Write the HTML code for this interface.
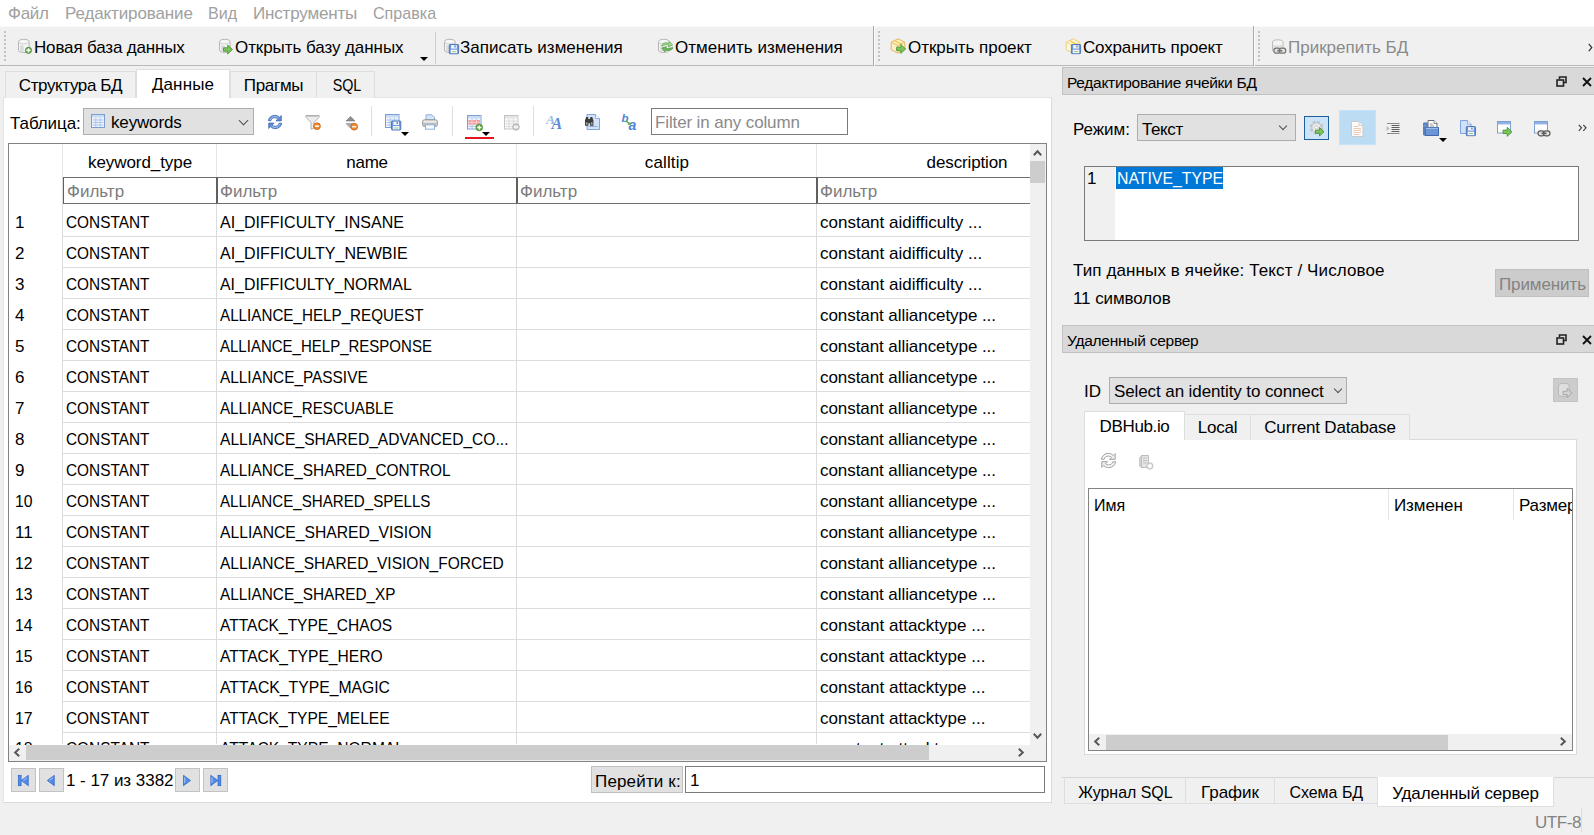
<!DOCTYPE html>
<html lang="ru"><head><meta charset="utf-8"><title>DB Browser for SQLite</title>
<style>
*{box-sizing:border-box;margin:0;padding:0}
html,body{width:1594px;height:835px;overflow:hidden;background:#f0f0f0}
body{font-family:"Liberation Sans",sans-serif;font-size:17px;color:#000;position:relative;line-height:20px}
.abs,.t{position:absolute;white-space:nowrap}
.t{line-height:20px;height:20px}
svg{position:absolute;overflow:visible}
#menubar{position:absolute;left:0;top:0;width:1594px;height:26px;background:#fff}
#menubar .t{color:#a0a0a0;top:4px}
#toolbar{position:absolute;left:0;top:26px;width:1594px;height:40px;background:#f0f0f0;border-top:1px solid #fafafa;border-bottom:1px solid #b9b9b9}
#toolbar .t{top:11px}
.grip{position:absolute;top:4px;width:2px;height:31px;background:repeating-linear-gradient(to bottom,#c2c2c2 0 2px,transparent 2px 4px)}
.vsep{position:absolute;width:1px;background:#cfcfcf}
.tsep{position:absolute;width:2px;top:-1px;height:40px;border-left:1px solid #a9a9a9;border-right:1px solid #fbfbfb}
/* tabs */
.tab{position:absolute;top:71px;height:27px;background:#f0f0f0;border:1px solid #dedede;border-bottom:none;text-align:center;line-height:27px;white-space:nowrap}
.tab.sel{top:69px;height:29px;background:#fff;line-height:29px;border-color:#dedede}
#pane{position:absolute;left:3px;top:97px;width:1049px;height:706px;background:#fff;border:1px solid #e3e3e3;border-right-color:#dadada;border-bottom-color:#dadada}
.combo{position:absolute;background:#e1e1e1;border:1px solid #adadad}
.input{position:absolute;background:#fff;border:1px solid #7a7a7a}
/* table */
#tbl{position:absolute;left:8px;top:143px;width:1039px;height:619px;border:1px solid #828282;background:#fff;overflow:hidden}
.row{position:absolute;left:0;width:1021px;height:31px}
.row:after{content:'';position:absolute;left:54px;right:0;bottom:0;height:1px;background:#dcdcdc}
.row>span{position:absolute;top:7px;line-height:20px;white-space:nowrap}
.c0{left:6px}.c1{left:57px}.c2{left:211px}.c4{left:811px}
.uc{transform:scaleX(.91);transform-origin:0 50%}
.colsep{position:absolute;width:1px;background:linear-gradient(#e6e6e6 0,#e6e6e6 33px,#dcdcdc 33px);top:0;height:600px}
.hdr{position:absolute;top:9px;line-height:20px;text-align:center;white-space:nowrap}
.flt{position:absolute;top:33px;height:27px;border:1px solid #6e6e6e;border-left:2px solid #606060;color:#7c7c7c;line-height:27px;padding-left:2px;background:#fff;white-space:nowrap}
.sbtn{position:absolute;background:#e1e1e1;border:1px solid #c3c3c3}
.dockt{position:absolute;left:1062px;width:534px;height:28px;background:#d9d9d9;border:1px solid #c2c2c2;line-height:29px;padding-left:4px;font-size:15.5px;white-space:nowrap}
.rtab{position:absolute;top:414px;height:26px;background:#f0f0f0;border:1px solid #dedede;border-bottom:none;text-align:center;line-height:26px;white-space:nowrap}
.rtab.sel{top:411px;height:29px;background:#fff;line-height:30px}
.btab{position:absolute;top:777px;height:27px;background:#f0f0f0;border:1px solid #dedede;border-top-color:#d4d4d4;text-align:center;line-height:29px;white-space:nowrap}
.btab.sel{height:30px;background:#fff;line-height:31px;border-top-color:#fff}
.arr{position:absolute;width:0;height:0;border-left:4px solid transparent;border-right:4px solid transparent;border-top:4px solid #000}
.chev{position:absolute;width:7px;height:7px;border-right:1.3px solid #505050;border-bottom:1.3px solid #505050}
.sba{border-right:2px solid #606060;border-bottom:2px solid #606060}

</style></head>
<body>
<div id="menubar">
<span class="t" style="letter-spacing:-0.26px;left:8px">Файл</span>
<span class="t" style="letter-spacing:-0.12px;left:65px">Редактирование</span>
<span class="t" style="left:208px"><span style="display:inline-block;transform:scaleX(0.945);transform-origin:left center">Вид</span></span>
<span class="t" style="letter-spacing:-0.17px;left:253px">Инструменты</span>
<span class="t" style="left:373px"><span style="display:inline-block;transform:scaleX(0.946);transform-origin:left center">Справка</span></span>
</div>
<div id="toolbar">
<div class="grip" style="left:4px"></div>
<svg style="left:17px;top:11px" width="16" height="16" viewBox="0 0 16 16"><path d="M1.5 3.6C1.5 2.2 3.9 1.3 6.8 1.3s5.3.9 5.3 2.3v8.6c0 1.4-2.4 2.3-5.3 2.3s-5.3-.9-5.3-2.3z" fill="#f6f6f6" stroke="#b4b4b4"/><path d="M3 6.5v6.3c1 .6 2.3.9 3.8.9V7.4C5.300 7.400 4 7.100 3 6.500z" fill="#dcdcdc"/><path d="M1.500 3.600c0 1.400 2.400 2.300 5.300 2.300s5.300-.900 5.300-2.300" fill="none" stroke="#cfcfcf"/><circle cx="11.5" cy="12.3" r="3.1" fill="#69aa48" stroke="#468a30" stroke-width=".8"/><path d="M11.5 10.200000000000001v4.200M9.4 12.3h4.200" stroke="#fff" stroke-width="1.400"/></svg>
<span class="t" style="letter-spacing:-0.16px;left:34px">Новая база данных</span>
<svg style="left:218px;top:11px" width="16" height="16" viewBox="0 0 16 16"><path d="M1.5 3.6C1.5 2.2 3.9 1.3 6.8 1.3s5.3.9 5.3 2.3v8.6c0 1.4-2.4 2.3-5.3 2.3s-5.3-.9-5.3-2.3z" fill="#f6f6f6" stroke="#b4b4b4"/><path d="M3 6.5v6.3c1 .6 2.3.9 3.8.9V7.4C5.300 7.400 4 7.100 3 6.500z" fill="#dcdcdc"/><path d="M1.500 3.600c0 1.400 2.400 2.300 5.300 2.300s5.300-.900 5.300-2.300" fill="none" stroke="#cfcfcf"/><polygon points="5.5,9.8 9.7,9.8 9.7,7.0 14.5,11.5 9.7,16.0 9.7,13.2 5.5,13.2" fill="#7cc35e" stroke="#4c9638" stroke-width=".9" stroke-linejoin="round"/></svg>
<span class="t" style="letter-spacing:-0.07px;left:235px">Открыть базу данных</span>
<div class="arr" style="left:420px;top:30px"></div>
<div class="vsep" style="left:435px;top:5px;height:32px;background:#cdcdcd"></div>
<svg style="left:443px;top:11px" width="16" height="16" viewBox="0 0 16 16"><path d="M1.5 3.6C1.5 2.2 3.9 1.3 6.8 1.3s5.3.9 5.3 2.3v8.6c0 1.4-2.4 2.3-5.3 2.3s-5.3-.9-5.3-2.3z" fill="#f6f6f6" stroke="#b4b4b4"/><path d="M3 6.5v6.3c1 .6 2.3.9 3.8.9V7.4C5.300 7.400 4 7.100 3 6.500z" fill="#dcdcdc"/><path d="M1.500 3.600c0 1.400 2.400 2.300 5.300 2.300s5.300-.900 5.300-2.300" fill="none" stroke="#cfcfcf"/><rect x="6.3" y="6.5" width="9.3" height="9.3" rx=".8" fill="#6b97dd" stroke="#4a70b6" stroke-width=".9"/><rect x="8.1" y="7.1" width="5.700000000000001" height="3.5" fill="#f2f7ff"/><rect x="11.400000000000002" y="7.5" width="1.200" height="2" fill="#4a70b6"/><rect x="7.699999999999999" y="11.7" width="6.500000000000001" height="3.5" fill="#f6faff"/><rect x="8.7" y="13.2" width="4.500000000000001" height="1" fill="#9cc47c"/></svg>
<span class="t" style="left:460px">Записать изменения</span>
<svg style="left:657px;top:11px" width="16" height="16" viewBox="0 0 16 16"><path d="M1.5 3.6C1.5 2.2 3.9 1.3 6.8 1.3s5.3.9 5.3 2.3v8.6c0 1.4-2.4 2.3-5.3 2.3s-5.3-.9-5.3-2.3z" fill="#f6f6f6" stroke="#b4b4b4"/><path d="M3 6.5v6.3c1 .6 2.3.9 3.8.9V7.4C5.300 7.400 4 7.100 3 6.500z" fill="#dcdcdc"/><path d="M1.500 3.600c0 1.400 2.400 2.300 5.300 2.300s5.300-.900 5.300-2.300" fill="none" stroke="#cfcfcf"/><path d="M5 6.500c1.500-1.800 4.500-2.300 7-1.200l.6-1.800 3 3.600-4.400 1.600.5-1.700C9.500 6.400 7 6.800 5 8z" fill="#a4d692" stroke="#5aa64c" stroke-width=".7" stroke-linejoin="round"/><path d="M15.800 10.500c-1.500 1.800-4.500 2.600-7.200 1.500l-.7 1.800-3-3.600 4.400-1.600-.4 1.700c2.100.8 4.600.3 6.600-1.100z" fill="#6fba5c" stroke="#3f8f38" stroke-width=".7" stroke-linejoin="round"/></svg>
<span class="t" style="left:675px">Отменить изменения</span>
<div class="tsep" style="left:873px"></div>
<div class="grip" style="left:878px"></div>
<svg style="left:890px;top:11px" width="16" height="16" viewBox="0 0 16 16"><path d="M8 .8L14.800 4.300v7.400L8 15.200 1.200 11.700V4.300z" fill="#fdf0c2" stroke="#e3b661" stroke-linejoin="round"/><path d="M1.500 4.400L8 7.700l6.500-3.300M8 7.700v7.200" fill="none" stroke="#e3b661" stroke-width=".9"/><path d="M4.600 2.600l6.600 3.400" stroke="#f2cf5a" stroke-width="1.600"/><polygon points="6.6,9.2 10.8,9.2 10.8,6.4 15.6,10.9 10.8,15.4 10.8,12.6 6.6,12.6" fill="#7cc35e" stroke="#4c9638" stroke-width=".9" stroke-linejoin="round"/></svg>
<span class="t" style="letter-spacing:-0.05px;left:908px">Открыть проект</span>
<svg style="left:1065px;top:11px" width="16" height="16" viewBox="0 0 16 16"><path d="M8 .8L14.800 4.300v7.400L8 15.200 1.200 11.700V4.300z" fill="#fdf6d8" stroke="#ecd27c" stroke-linejoin="round"/><path d="M1.500 4.400L8 7.700l6.500-3.300M8 7.700v7.200" fill="none" stroke="#ecd27c" stroke-width=".9"/><path d="M4.600 2.600l6.600 3.400" stroke="#f2cf5a" stroke-width="1.600"/><rect x="6.4" y="6.5" width="9.2" height="9.2" rx=".8" fill="#6b97dd" stroke="#4a70b6" stroke-width=".9"/><rect x="8.200000000000001" y="7.1" width="5.6" height="3.5" fill="#f2f7ff"/><rect x="11.399999999999999" y="7.5" width="1.200" height="2" fill="#4a70b6"/><rect x="7.800000000000001" y="11.7" width="6.3999999999999995" height="3.5" fill="#f6faff"/><rect x="8.8" y="13.1" width="4.3999999999999995" height="1" fill="#9cc47c"/></svg>
<span class="t" style="letter-spacing:-0.16px;left:1083px">Сохранить проект</span>
<div class="tsep" style="left:1253px"></div>
<div class="grip" style="left:1258px"></div>
<svg style="left:1271px;top:11px" width="16" height="16" viewBox="0 0 16 16"><path d="M1.500 4C1.500 2.600 3.900 1.800 6.800 1.800s5.300.8 5.300 2.200v8c0 1.400-2.400 2.300-5.300 2.300s-5.300-.9-5.300-2.300z" fill="#f4f4f4" stroke="#bcbcbc"/><path d="M2.500 6.500v6c1.200.7 2.600 1 4.300 1s3.100-.3 4.300-1v-6c-1.200.7-2.600 1-4.300 1s-3.100-.3-4.300-1z" fill="#dedede"/><rect x="2.8" y="10.2" width="6.500" height="5" rx="2.500" fill="#e2e2e2" stroke="#747474" stroke-width="1.200"/><rect x="8.3" y="10.2" width="6.500" height="5" rx="2.500" fill="#e2e2e2" stroke="#747474" stroke-width="1.200"/><path d="M6.3 12.7h5" stroke="#747474" stroke-width="1.600"/></svg>
<span class="t" style="left:1288px;color:#8a8a8a">Прикрепить БД</span>
<svg style="left:1588px;top:16px" width="5" height="9" viewBox="0 0 5 9"><path d="M.800 .800L3.800 4.500.800 8.200" stroke="#333" stroke-width="1.200" fill="none"/></svg>
</div>

<div id="pane"></div>
<div class="tab" style="letter-spacing:-0.38px;left:5px;width:131px">Структура БД</div>
<div class="tab sel" style="letter-spacing:0.13px;left:136px;width:94px">Данные</div>
<div class="tab" style="letter-spacing:-0.28px;left:230px;width:87px">Прагмы</div>
<div class="tab" style="left:316px;width:59px;padding-left:3px"><span style="display:inline-block;transform:scaleX(0.840);transform-origin:center center">SQL</span></div>

<span class="t" style="letter-spacing:-0.09px;left:10px;top:114px">Таблица:</span>
<div class="combo" style="left:83px;top:108px;width:171px;height:27px"><svg style="left:7px;top:5px" width="14" height="14" viewBox="0 0 14 14"><rect x="0.5" y="0.5" width="13" height="13" fill="#f1f6fd" stroke="#7c9fd3"/><rect x="1.0" y="1.0" width="12" height="2.600" fill="#c9dcf5"/><path d="M1.5 6.0h11" stroke="#a9c3ea" stroke-width="1"/><path d="M1.5 8.5h11" stroke="#a9c3ea" stroke-width="1"/><path d="M1.5 11.0h11" stroke="#a9c3ea" stroke-width="1"/><path d="M4.8 4.0v9M9.1 4.0v9" stroke="#a9c3ea" stroke-width=".9"/></svg><span class="t" style="letter-spacing:-0.16px;left:27px;top:4px">keywords</span><div class="chev" style="left:156px;top:8px;width:7px;height:7px;transform:rotate(45deg)"></div></div>
<svg style="left:267px;top:114px" width="16" height="16" viewBox="0 0 16 16"><path d="M1.300 6.800C1.800 3.400 4.600 1.300 7.800 1.300c1.900 0 3.500.700 4.700 2L14.300 1.500v5.400H8.900l1.900-1.900C10 4.200 9 3.800 7.800 3.800 5.900 3.800 4.400 5 3.900 6.800z" fill="#5b8ad2" stroke="#3c66ad" stroke-width=".7" stroke-linejoin="round"/><path d="M14.700 9.200C14.200 12.600 11.400 14.700 8.200 14.700c-1.900 0-3.500-.700-4.700-2L1.700 14.500V9.100h5.400L5.200 11c.8.800 1.800 1.200 3 1.200 1.900 0 3.400-1.200 3.900-3z" fill="#5b8ad2" stroke="#3c66ad" stroke-width=".7" stroke-linejoin="round"/><path d="M3 6C3.800 4 5.600 2.600 7.800 2.600c1.500 0 2.800.600 3.700 1.500" fill="none" stroke="#b9d3f3" stroke-width=".9"/><path d="M13 10c-.8 2-2.600 3.400-4.800 3.400-1.500 0-2.800-.600-3.700-1.500" fill="none" stroke="#b9d3f3" stroke-width=".9"/></svg>
<svg style="left:305px;top:114px" width="16" height="16" viewBox="0 0 16 16"><path d="M.800 1.500h13.400v1.500L9 8.500v5.500l-3 1.200V8.500L.800 3z" fill="#ececec" stroke="#b0b0b0" stroke-linejoin="round"/><path d="M2 2.500h11" stroke="#c8c8c8"/><circle cx="12" cy="12.2" r="3.4" fill="#ee8a2e" stroke="#c8641a" stroke-width=".8"/><path d="M10 12.2h4" stroke="#fff" stroke-width="1.500"/></svg>
<svg style="left:345px;top:115px" width="16" height="16" viewBox="0 0 16 16"><path d="M1 6l4.500-4.600L10 6z" fill="#8c9094" stroke="#70757a" stroke-width=".6"/><path d="M1 8.500h9L5.500 13.200z" fill="#a9aeb3" stroke="#8a8f94" stroke-width=".6"/><circle cx="9.2" cy="11.7" r="3.4" fill="#ee8a2e" stroke="#c8641a" stroke-width=".8"/><path d="M7.199999999999999 11.7h4" stroke="#fff" stroke-width="1.500"/></svg>
<div class="vsep" style="left:371px;top:106px;height:30px;background:#dedede"></div>
<svg style="left:385px;top:114px" width="16" height="16" viewBox="0 0 16 16"><rect x="0.5" y="0.5" width="13.5" height="13" fill="#f1f6fd" stroke="#7c9fd3"/><rect x="1.0" y="1.0" width="12.5" height="2.600" fill="#c9dcf5"/><path d="M1.5 6.0h11.5" stroke="#a9c3ea" stroke-width="1"/><path d="M1.5 8.5h11.5" stroke="#a9c3ea" stroke-width="1"/><path d="M1.5 11.0h11.5" stroke="#a9c3ea" stroke-width="1"/><path d="M5.0 4.0v9M9.4 4.0v9" stroke="#a9c3ea" stroke-width=".9"/><rect x="6.5" y="7" width="9.3" height="9" rx=".8" fill="#6b97dd" stroke="#4a70b6" stroke-width=".9"/><rect x="8.3" y="7.6" width="5.700000000000001" height="3.4" fill="#f2f7ff"/><rect x="11.600000000000001" y="8" width="1.200" height="2" fill="#4a70b6"/><rect x="7.9" y="12.0" width="6.500000000000001" height="3.4" fill="#f6faff"/><rect x="8.9" y="13.5" width="4.500000000000001" height="1" fill="#9cc47c"/></svg>
<div class="arr" style="left:401px;top:132px"></div>
<svg style="left:422px;top:114px" width="16" height="16" viewBox="0 0 16 16"><path d="M4 6V.800h6l2.500 2.500V6z" fill="#d6e6fa" stroke="#8fb0dc" stroke-linejoin="round"/><rect x=".700" y="5.800" width="14.600" height="6.700" rx="1.800" fill="#e9e9e9" stroke="#8e8e8e"/><rect x="1.300" y="8.800" width="13.400" height="3.200" fill="#bdbdbd"/><rect x="3.500" y="10.800" width="9" height="4.400" fill="#f8fbff" stroke="#8fb0dc"/></svg>
<div class="vsep" style="left:452px;top:106px;height:30px;background:#dedede"></div>
<svg style="left:467px;top:115px" width="16" height="16" viewBox="0 0 16 16"><rect x="0.5" y="0.5" width="13.5" height="13.5" fill="#f1f6fd" stroke="#7c9fd3"/><rect x="1.0" y="1.0" width="12.5" height="2.600" fill="#c9dcf5"/><path d="M1.5 6.1h11.5" stroke="#a9c3ea" stroke-width="1"/><path d="M1.5 8.8h11.5" stroke="#a9c3ea" stroke-width="1"/><path d="M1.5 11.4h11.5" stroke="#a9c3ea" stroke-width="1"/><path d="M5.0 4.0v9.5M9.4 4.0v9.5" stroke="#a9c3ea" stroke-width=".9"/><rect x="1.500" y="5" width="11.500" height="4.600" fill="#f39c9c"/><path d="M1.500 7.300h11.500M5 5v4.600M9.500 5v4.600" stroke="#fbd0d0" stroke-width=".9"/><circle cx="12.3" cy="12.5" r="3.3" fill="#69aa48" stroke="#468a30" stroke-width=".8"/><path d="M12.3 10.4v4.200M10.200000000000001 12.5h4.200" stroke="#fff" stroke-width="1.400"/></svg>
<div class="arr" style="left:482px;top:132px"></div>
<div class="abs" style="left:465px;top:137px;width:29px;height:2px;background:#e8141c"></div>
<svg style="left:504px;top:115px" width="16" height="16" viewBox="0 0 16 16"><g opacity=".9"><rect x="0.5" y="0.5" width="13.5" height="13.5" fill="#fafafa" stroke="#bdbdbd"/><rect x="1.0" y="1.0" width="12.5" height="2.600" fill="#e2e2e2"/><path d="M1.5 6.1h11.5" stroke="#d6d6d6" stroke-width="1"/><path d="M1.5 8.8h11.5" stroke="#d6d6d6" stroke-width="1"/><path d="M1.5 11.4h11.5" stroke="#d6d6d6" stroke-width="1"/><path d="M5.0 4.0v9.5M9.4 4.0v9.5" stroke="#d6d6d6" stroke-width=".9"/><circle cx="12" cy="12" r="3.3" fill="#d0d0d0" stroke="#a6a6a6" stroke-width=".8"/><path d="M10 12h4" stroke="#fff" stroke-width="1.500"/></g></svg>
<div class="vsep" style="left:533px;top:106px;height:30px;background:#dedede"></div>
<svg style="left:547px;top:114px" width="16" height="16" viewBox="0 0 16 16"><text x="-1" y="9.800" font-family="Liberation Serif,serif" font-style="italic" font-weight="bold" font-size="13.500" fill="#96baea">A</text><text x="4.500" y="15" font-family="Liberation Serif,serif" font-style="italic" font-weight="bold" font-size="16" fill="#5a8ad8">A</text></svg>
<svg style="left:584px;top:114px" width="16" height="16" viewBox="0 0 16 16"><path d="M3 0.5h8.5l4 4v11h-12.5z" fill="#d3e3f9" stroke="#7fa3dc" stroke-linejoin="round"/><path d="M11.5 0.5v4h4" fill="#fff" stroke="#7fa3dc" stroke-width=".8" stroke-linejoin="round"/><path d="M5 12.500h8.500" stroke="#8fb0dc"/><g transform="translate(-.800,1.800)"><path d="M1.800 4.500L3 1.300h1.800l.4 2h1.600l.4-2H9l1.200 3.200v5.500H6.800V7.500H5.200V10H1.800z" fill="#3c3c3c"/><rect x="2.600" y="6.500" width="1.800" height="2.500" fill="#9a9a9a"/><rect x="7.600" y="6.500" width="1.800" height="2.500" fill="#9a9a9a"/></g></svg>
<svg style="left:621px;top:114px" width="16" height="16" viewBox="0 0 16 16"><text x=".500" y="8" font-family="Liberation Sans,sans-serif" font-style="italic" font-weight="bold" font-size="11.500" fill="#4f86d8">b</text><text x="7.500" y="15.800" font-family="Liberation Sans,sans-serif" font-style="italic" font-weight="bold" font-size="14" fill="#4f86d8">a</text><path d="M5 7l3.500 2.800" stroke="#5fae4a" stroke-width="1.600"/><path d="M10 11.200L6.500 10.600 9 8z" fill="#5fae4a"/></svg>
<div class="input" style="left:651px;top:108px;width:197px;height:27px"><span class="t" style="letter-spacing:-0.13px;left:3px;top:4px;color:#8a8a8a">Filter in any column</span></div>

<div id="tbl">
<div class="colsep" style="left:53px"></div>
<div class="colsep" style="left:207px;top:0"></div>
<div class="colsep" style="left:507px;top:0"></div>
<div class="colsep" style="left:807px;top:0"></div>
<div class="hdr" style="letter-spacing:-0.07px;left:54px;width:154px">keyword_type</div>
<div class="hdr" style="letter-spacing:-0.26px;left:208px;width:300px">name</div>
<div class="hdr" style="letter-spacing:0.12px;left:508px;width:300px">calltip</div>
<div class="hdr" style="letter-spacing:-0.13px;left:808px;width:300px">description</div>
<div class="flt" style="left:54px;width:154px;border-left-width:1px;padding-left:3px">Фильтр</div>
<div class="flt" style="left:207px;width:301px">Фильтр</div>
<div class="flt" style="left:507px;width:301px">Фильтр</div>
<div class="flt" style="left:807px;width:301px">Фильтр</div>
<div class="row" style="top:62px"><span class="c0">1</span><span class="c1 uc" style="transform:scaleX(0.904)">CONSTANT</span><span class="c2 uc" style="transform:scaleX(0.942)">AI_DIFFICULTY_INSANE</span><span class="c4">constant aidifficulty ...</span></div>
<div class="row" style="top:93px"><span class="c0">2</span><span class="c1 uc" style="transform:scaleX(0.904)">CONSTANT</span><span class="c2 uc" style="transform:scaleX(0.943)">AI_DIFFICULTY_NEWBIE</span><span class="c4">constant aidifficulty ...</span></div>
<div class="row" style="top:124px"><span class="c0">3</span><span class="c1 uc" style="transform:scaleX(0.904)">CONSTANT</span><span class="c2 uc" style="transform:scaleX(0.937)">AI_DIFFICULTY_NORMAL</span><span class="c4">constant aidifficulty ...</span></div>
<div class="row" style="top:155px"><span class="c0">4</span><span class="c1 uc" style="transform:scaleX(0.904)">CONSTANT</span><span class="c2 uc" style="transform:scaleX(0.894)">ALLIANCE_HELP_REQUEST</span><span class="c4" style="letter-spacing:-0.07px">constant alliancetype ...</span></div>
<div class="row" style="top:186px"><span class="c0">5</span><span class="c1 uc" style="transform:scaleX(0.904)">CONSTANT</span><span class="c2 uc" style="transform:scaleX(0.883)">ALLIANCE_HELP_RESPONSE</span><span class="c4" style="letter-spacing:-0.07px">constant alliancetype ...</span></div>
<div class="row" style="top:217px"><span class="c0">6</span><span class="c1 uc" style="transform:scaleX(0.904)">CONSTANT</span><span class="c2 uc" style="transform:scaleX(0.905)">ALLIANCE_PASSIVE</span><span class="c4" style="letter-spacing:-0.07px">constant alliancetype ...</span></div>
<div class="row" style="top:248px"><span class="c0">7</span><span class="c1 uc" style="transform:scaleX(0.904)">CONSTANT</span><span class="c2 uc" style="transform:scaleX(0.892)">ALLIANCE_RESCUABLE</span><span class="c4" style="letter-spacing:-0.07px">constant alliancetype ...</span></div>
<div class="row" style="top:279px"><span class="c0">8</span><span class="c1 uc" style="transform:scaleX(0.904)">CONSTANT</span><span class="c2 uc" style="transform:scaleX(0.918)">ALLIANCE_SHARED_ADVANCED_CO...</span><span class="c4" style="letter-spacing:-0.07px">constant alliancetype ...</span></div>
<div class="row" style="top:310px"><span class="c0">9</span><span class="c1 uc" style="transform:scaleX(0.904)">CONSTANT</span><span class="c2 uc" style="transform:scaleX(0.904)">ALLIANCE_SHARED_CONTROL</span><span class="c4" style="letter-spacing:-0.07px">constant alliancetype ...</span></div>
<div class="row" style="top:341px"><span class="c0"><span style="display:inline-block;transform:scaleX(0.928);transform-origin:left center">10</span></span><span class="c1 uc" style="transform:scaleX(0.904)">CONSTANT</span><span class="c2 uc" style="transform:scaleX(0.891)">ALLIANCE_SHARED_SPELLS</span><span class="c4" style="letter-spacing:-0.07px">constant alliancetype ...</span></div>
<div class="row" style="top:372px"><span class="c0">11</span><span class="c1 uc" style="transform:scaleX(0.904)">CONSTANT</span><span class="c2 uc" style="transform:scaleX(0.922)">ALLIANCE_SHARED_VISION</span><span class="c4" style="letter-spacing:-0.07px">constant alliancetype ...</span></div>
<div class="row" style="top:403px"><span class="c0"><span style="display:inline-block;transform:scaleX(0.928);transform-origin:left center">12</span></span><span class="c1 uc" style="transform:scaleX(0.904)">CONSTANT</span><span class="c2 uc" style="transform:scaleX(0.913)">ALLIANCE_SHARED_VISION_FORCED</span><span class="c4" style="letter-spacing:-0.07px">constant alliancetype ...</span></div>
<div class="row" style="top:434px"><span class="c0"><span style="display:inline-block;transform:scaleX(0.928);transform-origin:left center">13</span></span><span class="c1 uc" style="transform:scaleX(0.904)">CONSTANT</span><span class="c2 uc" style="transform:scaleX(0.902)">ALLIANCE_SHARED_XP</span><span class="c4" style="letter-spacing:-0.07px">constant alliancetype ...</span></div>
<div class="row" style="top:465px"><span class="c0"><span style="display:inline-block;transform:scaleX(0.928);transform-origin:left center">14</span></span><span class="c1 uc" style="transform:scaleX(0.904)">CONSTANT</span><span class="c2 uc" style="transform:scaleX(0.914)">ATTACK_TYPE_CHAOS</span><span class="c4">constant attacktype ...</span></div>
<div class="row" style="top:496px"><span class="c0"><span style="display:inline-block;transform:scaleX(0.928);transform-origin:left center">15</span></span><span class="c1 uc" style="transform:scaleX(0.904)">CONSTANT</span><span class="c2 uc" style="transform:scaleX(0.919)">ATTACK_TYPE_HERO</span><span class="c4">constant attacktype ...</span></div>
<div class="row" style="top:527px"><span class="c0"><span style="display:inline-block;transform:scaleX(0.928);transform-origin:left center">16</span></span><span class="c1 uc" style="transform:scaleX(0.904)">CONSTANT</span><span class="c2 uc" style="transform:scaleX(0.926)">ATTACK_TYPE_MAGIC</span><span class="c4">constant attacktype ...</span></div>
<div class="row" style="top:558px"><span class="c0"><span style="display:inline-block;transform:scaleX(0.928);transform-origin:left center">17</span></span><span class="c1 uc" style="transform:scaleX(0.904)">CONSTANT</span><span class="c2 uc" style="transform:scaleX(0.914)">ATTACK_TYPE_MELEE</span><span class="c4">constant attacktype ...</span></div>
<div class="row" style="top:588px"><span class="c0"><span style="display:inline-block;transform:scaleX(0.928);transform-origin:left center">18</span></span><span class="c1 uc" style="transform:scaleX(0.904)">CONSTANT</span><span class="c2 uc" style="transform:scaleX(0.917)">ATTACK_TYPE_NORMAL</span><span class="c4">constant attacktype ...</span></div>

<div id="vsb" class="abs" style="left:1021px;top:0;width:17px;height:601px;background:#f0f0f0">
 <svg style="left:3px;top:5px" width="9" height="8" viewBox="0 0 9 8"><path d="M.800 6.200L4.500 2.200l3.700 4" stroke="#585858" stroke-width="2" fill="none"/></svg>
 <div class="abs" style="left:0;top:17px;width:15px;height:22px;background:#cdcdcd"></div>
 <svg style="left:3px;top:588px" width="9" height="8" viewBox="0 0 9 8"><path d="M.800 1.800L4.500 5.800l3.700-4" stroke="#585858" stroke-width="2" fill="none"/></svg>
</div>
<div id="hsb" class="abs" style="left:0;top:601px;width:1021px;height:16px;background:#f0f0f0">
 <svg style="left:4px;top:3px" width="8" height="9" viewBox="0 0 8 9"><path d="M6.200 .800L2.200 4.500l4 3.700" stroke="#585858" stroke-width="2" fill="none"/></svg>
 <div class="abs" style="left:17px;top:0;width:903px;height:15px;background:#cdcdcd"></div>
 <svg style="left:1008px;top:3px" width="8" height="9" viewBox="0 0 8 9"><path d="M1.800 .800L5.800 4.500l-4 3.700" stroke="#585858" stroke-width="2" fill="none"/></svg>
</div>
<div class="abs" style="left:1021px;top:601px;width:17px;height:16px;background:#f0f0f0"></div>
</div>

<div class="sbtn" style="left:11px;top:768px;width:25px;height:24px"><svg style="left:4px;top:3px" width="16" height="18" viewBox="0 0 16 18"><rect x="2.3" y="3.300" width="2.800" height="10.400" fill="#4f8de8" stroke="#2f62c0" stroke-width=".7"/><path d="M12.3 3.300v10.400L5.3 8.500z" fill="#4f8de8" stroke="#2f62c0" stroke-width=".7" stroke-linejoin="round"/><path d="M11.1 5.600L7.3 8.500" stroke="#a8c8f6" stroke-width="1" fill="none"/></svg></div>
<div class="sbtn" style="left:39px;top:768px;width:25px;height:24px"><svg style="left:4px;top:3px" width="16" height="18" viewBox="0 0 16 18"><path d="M10.3 3.300v10.400L3.3 8.500z" fill="#4f8de8" stroke="#2f62c0" stroke-width=".7" stroke-linejoin="round"/><path d="M9.1 5.600L5.3 8.500" stroke="#a8c8f6" stroke-width="1" fill="none"/></svg></div>
<span class="t" style="letter-spacing:-0.04px;left:66px;top:771px">1 - 17 из 3382</span>
<div class="sbtn" style="left:175px;top:768px;width:25px;height:24px"><svg style="left:4px;top:3px" width="16" height="18" viewBox="0 0 16 18"><path d="M3.5 3.300v10.400L10.5 8.500z" fill="#4f8de8" stroke="#2f62c0" stroke-width=".7" stroke-linejoin="round"/><path d="M4.7 5.300v5.500" stroke="#a8c8f6" stroke-width="1" fill="none"/></svg></div>
<div class="sbtn" style="left:203px;top:768px;width:25px;height:24px"><svg style="left:4px;top:3px" width="16" height="18" viewBox="0 0 16 18"><path d="M2.8 3.300v10.400L9.8 8.500z" fill="#4f8de8" stroke="#2f62c0" stroke-width=".7" stroke-linejoin="round"/><path d="M4.0 5.300v5.500" stroke="#a8c8f6" stroke-width="1" fill="none"/><rect x="10" y="3.300" width="2.800" height="10.400" fill="#4f8de8" stroke="#2f62c0" stroke-width=".7"/></svg></div>
<div class="sbtn" style="left:591px;top:766px;width:92px;height:27px;border-color:#c0c0c0"><span class="t" style="letter-spacing:0.16px;left:3px;top:5px">Перейти к:</span></div>
<div class="input" style="left:685px;top:766px;width:360px;height:27px"><span class="t" style="left:4px;top:4px">1</span></div>

<!-- right dock 1 -->
<div class="dockt" style="letter-spacing:-0.29px;top:67px">Редактирование ячейки БД</div>
<svg style="left:1556px;top:76px" width="11" height="11" viewBox="0 0 11 11"><path d="M3.500 3V1h6.500v5.500H8" fill="none" stroke="#222" stroke-width="1.600"/><rect x="1" y="4" width="6.500" height="6" fill="none" stroke="#222" stroke-width="1.600"/></svg>
<svg style="left:1582px;top:77px" width="10" height="10" viewBox="0 0 10 10"><path d="M1 1l8 8M9 1L1 9" stroke="#111" stroke-width="1.800"/></svg>
<span class="t" style="letter-spacing:-0.04px;left:1073px;top:120px">Режим:</span>
<div class="combo" style="left:1137px;top:114px;width:159px;height:27px"><span class="t" style="letter-spacing:-0.40px;left:4px;top:5px">Текст</span><div class="chev" style="left:142px;top:8px;width:6px;height:6px;transform:rotate(45deg)"></div></div>
<div class="abs" style="left:1304px;top:116px;width:25px;height:24px;background:#cce4f7;border:1px solid #1f5f9e"></div>
<svg style="left:1309px;top:120px" width="16" height="16" viewBox="0 0 16 16"><g transform="translate(7.500,7.500)"><circle r="5.600" fill="none" stroke="#c4c4c4" stroke-width="2.600" stroke-dasharray="2.600 1.800"/><circle r="4.600" fill="#ededed" stroke="#b4b4b4" stroke-width=".8"/><circle r="1.800" fill="#fafafa" stroke="#b4b4b4" stroke-width=".7"/></g><polygon points="6.5,10.2 10.5,10.2 10.5,7.5 15.0,11.8 10.5,16.0 10.5,13.4 6.5,13.4" fill="#7cc35e" stroke="#4c9638" stroke-width=".9" stroke-linejoin="round"/></svg>
<div class="abs" style="left:1339px;top:110px;width:37px;height:35px;background:#bcdcf4;border:1px solid #c6e2f6"></div>
<svg style="left:1350px;top:121px" width="16" height="16" viewBox="0 0 16 16"><path d="M1.500 .500h7.500l4 4v11H1.500z" fill="#fbfbfb" stroke="#c9c9c9" stroke-linejoin="round"/><path d="M9 .500v4h4" fill="#f0f0f0" stroke="#c9c9c9" stroke-width=".8"/><path d="M3.500 5.500h5M3.500 7.500h7.500M3.500 9.500h7.500M3.500 11.500h7.500M3.500 13.500h6" stroke="#e6c3a6" stroke-width=".9"/></svg>
<svg style="left:1386px;top:123px" width="16" height="16" viewBox="0 0 16 16"><path d="M1 .500h12.500M1 10.500h12.500" stroke="#8a8a8a" stroke-width="1"/><path d="M5.500 2.500h8M5.500 4.500h8M5.500 6.500h8M5.500 8.500h8" stroke="#5e5e5e" stroke-width="1"/><path d="M.500 3L3.800 5.500 .500 8z" fill="#bdbdbd"/></svg>
<svg style="left:1423px;top:120px" width="16" height="16" viewBox="0 0 16 16"><path d="M5 0.5h6l3 3v5h-9z" fill="#fff" stroke="#6e6e6e" stroke-linejoin="round"/><path d="M11 0.5v3h3" fill="#fff" stroke="#6e6e6e" stroke-width=".8" stroke-linejoin="round"/><path d="M6.800 4h3M6.800 6h4.500" stroke="#8a8a8a" stroke-width=".9"/><path d="M.700 3h3.500v12H.700z" fill="#6f93cc" stroke="#4a6fb0"/><path d="M2.200 7.500h13.300v8H2.200z" fill="#6c95d6" stroke="#3f68ad" stroke-linejoin="round"/><path d="M2.800 8.300h12" stroke="#a9c6f0"/></svg>
<div class="arr" style="left:1439px;top:138px"></div>
<svg style="left:1460px;top:120px" width="16" height="16" viewBox="0 0 16 16"><path d="M0.5 0.5h7.0l3.5 3.5v9.5h-10.5z" fill="#cfe2fa" stroke="#7fa3dc" stroke-linejoin="round"/><path d="M7.5 0.5v3.5h3.5" fill="#fff" stroke="#7fa3dc" stroke-width=".8" stroke-linejoin="round"/><rect x="6.3" y="6.5" width="9.2" height="9.2" rx=".8" fill="#6b97dd" stroke="#4a70b6" stroke-width=".9"/><rect x="8.1" y="7.1" width="5.6" height="3.5" fill="#f2f7ff"/><rect x="11.3" y="7.5" width="1.200" height="2" fill="#4a70b6"/><rect x="7.699999999999999" y="11.7" width="6.3999999999999995" height="3.5" fill="#f6faff"/><rect x="8.7" y="13.1" width="4.3999999999999995" height="1" fill="#9cc47c"/></svg>
<svg style="left:1497px;top:121px" width="16" height="16" viewBox="0 0 16 16"><rect x="0.5" y="0.5" width="13" height="11.5" fill="#fdfdfd" stroke="#7f9fd0"/><rect x="1.0" y="1.0" width="12" height="2.400" fill="#8fb1e6"/><polygon points="6.0,9.1 10.2,9.1 10.2,6.3 15.0,10.8 10.2,15.3 10.2,12.5 6.0,12.5" fill="#7cc35e" stroke="#4c9638" stroke-width=".9" stroke-linejoin="round"/></svg>
<svg style="left:1534px;top:121px" width="16" height="16" viewBox="0 0 16 16"><rect x="0.5" y="0.5" width="13" height="11.5" fill="#fdfdfd" stroke="#7f9fd0"/><rect x="1.0" y="1.0" width="12" height="2.400" fill="#8fb1e6"/><rect x="4" y="9.8" width="6.500" height="5" rx="2.500" fill="#e0e0e0" stroke="#5a5a5a" stroke-width="1.200"/><rect x="9.5" y="9.8" width="6.500" height="5" rx="2.500" fill="#e0e0e0" stroke="#5a5a5a" stroke-width="1.200"/><path d="M7.5 12.3h5" stroke="#5a5a5a" stroke-width="1.600"/></svg>
<svg style="left:1578px;top:124px" width="9" height="8" viewBox="0 0 9 8"><path d="M.800 .800L3.500 3.800.800 6.800M5.300 .800L8 3.800 5.300 6.800" stroke="#444" stroke-width="1.200" fill="none"/></svg>
<div class="abs" style="left:1084px;top:166px;width:495px;height:75px;background:#fff;border:1px solid #7a7a7a">
 <div class="abs" style="left:0;top:0;width:30px;height:73px;background:#f0f0f0"></div>
 <span class="t" style="left:2px;top:2px">1</span>
 <div class="abs" style="left:31px;top:0;width:107px;height:22px;background:#0078d7"></div>
 <span class="t uc" style="transform:scaleX(0.936);left:32px;top:2px;color:#fff;transform:scaleX(.93)">NATIVE_TYPE</span>
</div>
<span class="t" style="letter-spacing:0.11px;left:1073px;top:261px">Тип данных в ячейке: Текст / Числовое</span>
<span class="t" style="letter-spacing:-0.08px;left:1073px;top:289px">11 символов</span>
<div class="abs" style="left:1495px;top:269px;width:94px;height:28px;background:#cccccc;border:1px solid #bfbfbf"><span class="t" style="letter-spacing:-0.10px;left:3px;top:5px;color:#838383">Применить</span></div>

<!-- right dock 2 -->
<div class="dockt" style="letter-spacing:-0.25px;top:325px">Удаленный сервер</div>
<svg style="left:1556px;top:334px" width="11" height="11" viewBox="0 0 11 11"><path d="M3.500 3V1h6.500v5.500H8" fill="none" stroke="#222" stroke-width="1.600"/><rect x="1" y="4" width="6.500" height="6" fill="none" stroke="#222" stroke-width="1.600"/></svg>
<svg style="left:1582px;top:335px" width="10" height="10" viewBox="0 0 10 10"><path d="M1 1l8 8M9 1L1 9" stroke="#111" stroke-width="1.800"/></svg>
<span class="t" style="left:1084px;top:382px">ID</span>
<div class="combo" style="left:1109px;top:377px;width:238px;height:27px"><span class="t" style="letter-spacing:-0.10px;left:4px;top:4px">Select an identity to connect</span><div class="chev" style="left:225px;top:8px;width:6px;height:6px;transform:rotate(45deg)"></div></div>
<div class="abs" style="left:1553px;top:378px;width:25px;height:24px;background:#cccccc;border:1px solid #c4c4c4"></div>
<svg style="left:1557px;top:382px" width="16" height="16" viewBox="0 0 16 16"><g opacity=".85"><path d="M1.500 3.600C1.500 2.200 3.900 1.300 6.800 1.300s5.300.9 5.300 2.300v8.600c0 1.400-2.400 2.300-5.300 2.300s-5.300-.9-5.300-2.300z" fill="#e2e2e2" stroke="#b4b4b4"/><polygon points="6.0,9.3 10.2,9.3 10.2,6.5 15.0,11.0 10.2,15.5 10.2,12.7 6.0,12.7" fill="#d4d4d4" stroke="#9c9c9c" stroke-width=".9" stroke-linejoin="round"/></g></svg>
<div class="abs" style="left:1084px;top:439px;width:493px;height:316px;background:#fff;border:1px solid #dadada"></div>
<div class="rtab sel" style="letter-spacing:-0.37px;left:1084px;width:101px">DBHub.io</div>
<div class="rtab" style="letter-spacing:-0.27px;left:1184px;width:67px">Local</div>
<div class="rtab" style="letter-spacing:-0.17px;left:1250px;width:160px">Current Database</div>
<svg style="left:1100px;top:452px" width="17" height="17" viewBox="0 0 16 16"><path d="M1.300 6.800C1.800 3.400 4.600 1.300 7.800 1.300c1.900 0 3.500.700 4.700 2L14.300 1.500v5.400H8.900l1.900-1.900C10 4.200 9 3.800 7.800 3.800 5.900 3.800 4.400 5 3.900 6.800z" fill="#ececec" stroke="#9e9e9e" stroke-width=".9" stroke-linejoin="round"/><path d="M14.700 9.200C14.200 12.600 11.400 14.700 8.200 14.700c-1.900 0-3.500-.700-4.700-2L1.700 14.500V9.100h5.400L5.200 11c.8.800 1.800 1.200 3 1.200 1.900 0 3.400-1.200 3.900-3z" fill="#ececec" stroke="#9e9e9e" stroke-width=".9" stroke-linejoin="round"/><path d="M3 6C3.800 4 5.600 2.600 7.800 2.600c1.500 0 2.800.600 3.700 1.500" fill="none" stroke="#ffffff" stroke-width=".9"/><path d="M13 10c-.8 2-2.600 3.400-4.800 3.400-1.500 0-2.800-.600-3.700-1.500" fill="none" stroke="#ffffff" stroke-width=".9"/></svg>
<svg style="left:1138px;top:454px" width="16" height="16" viewBox="0 0 16 16"><g opacity=".8"><path d="M3.500 1.500h7v12h-7z" fill="#dedede" stroke="#adadad"/><path d="M1.500 4l2-2.500v12l-2-1.500z" fill="#c9c9c9" stroke="#adadad" stroke-width=".7"/><path d="M5 4h4M5 6.500h4M5 9h4" stroke="#b5b5b5"/><circle cx="11.800" cy="12" r="3.200" fill="#dadada" stroke="#a6a6a6" stroke-width=".8"/><path d="M11.800 10v4M9.800 12h4" stroke="#fff" stroke-width="1.300"/></g></svg>
<div class="abs" style="left:1088px;top:488px;width:485px;height:263px;background:#fff;border:1px solid #828282;overflow:hidden">
 <span class="t" style="left:5px;top:7px"><span style="display:inline-block;transform:scaleX(0.940);transform-origin:left center">Имя</span></span>
 <div class="vsep" style="left:299px;top:0;height:31px;background:#e5e5e5"></div>
 <span class="t" style="letter-spacing:-0.10px;left:305px;top:7px">Изменен</span>
 <div class="vsep" style="left:424px;top:0;height:31px;background:#e5e5e5"></div>
 <span class="t" style="letter-spacing:-0.19px;left:430px;top:7px">Размер</span>
 <div class="abs" style="left:0;top:245px;width:483px;height:16px;background:#f0f0f0">
  <svg style="left:4px;top:3px" width="8" height="9" viewBox="0 0 8 9"><path d="M6.200 .800L2.200 4.500l4 3.700" stroke="#585858" stroke-width="2" fill="none"/></svg>
  <div class="abs" style="left:17px;top:1px;width:342px;height:15px;background:#cdcdcd"></div>
  <svg style="left:470px;top:3px" width="8" height="9" viewBox="0 0 8 9"><path d="M1.800 .800L5.800 4.500l-4 3.700" stroke="#585858" stroke-width="2" fill="none"/></svg>
 </div>
</div>
<div class="abs" style="left:1062px;top:777px;width:532px;height:1px;background:#d4d4d4"></div>
<div class="btab" style="left:1064px;width:122px"><span style="display:inline-block;transform:scaleX(0.936);transform-origin:center center">Журнал SQL</span></div>
<div class="btab" style="left:1185px;width:90px">График</div>
<div class="btab" style="left:1274px;width:104px"><span style="display:inline-block;transform:scaleX(0.939);transform-origin:center center">Схема БД</span></div>
<div class="btab sel" style="letter-spacing:-0.12px;left:1377px;width:177px">Удаленный сервер</div>
<span class="t" style="letter-spacing:-0.43px;left:1535px;top:813px;color:#828282">UTF-8</span>
<div class="vsep" style="left:1581px;top:808px;height:24px;background:#dcdcdc"></div>

</body></html>
